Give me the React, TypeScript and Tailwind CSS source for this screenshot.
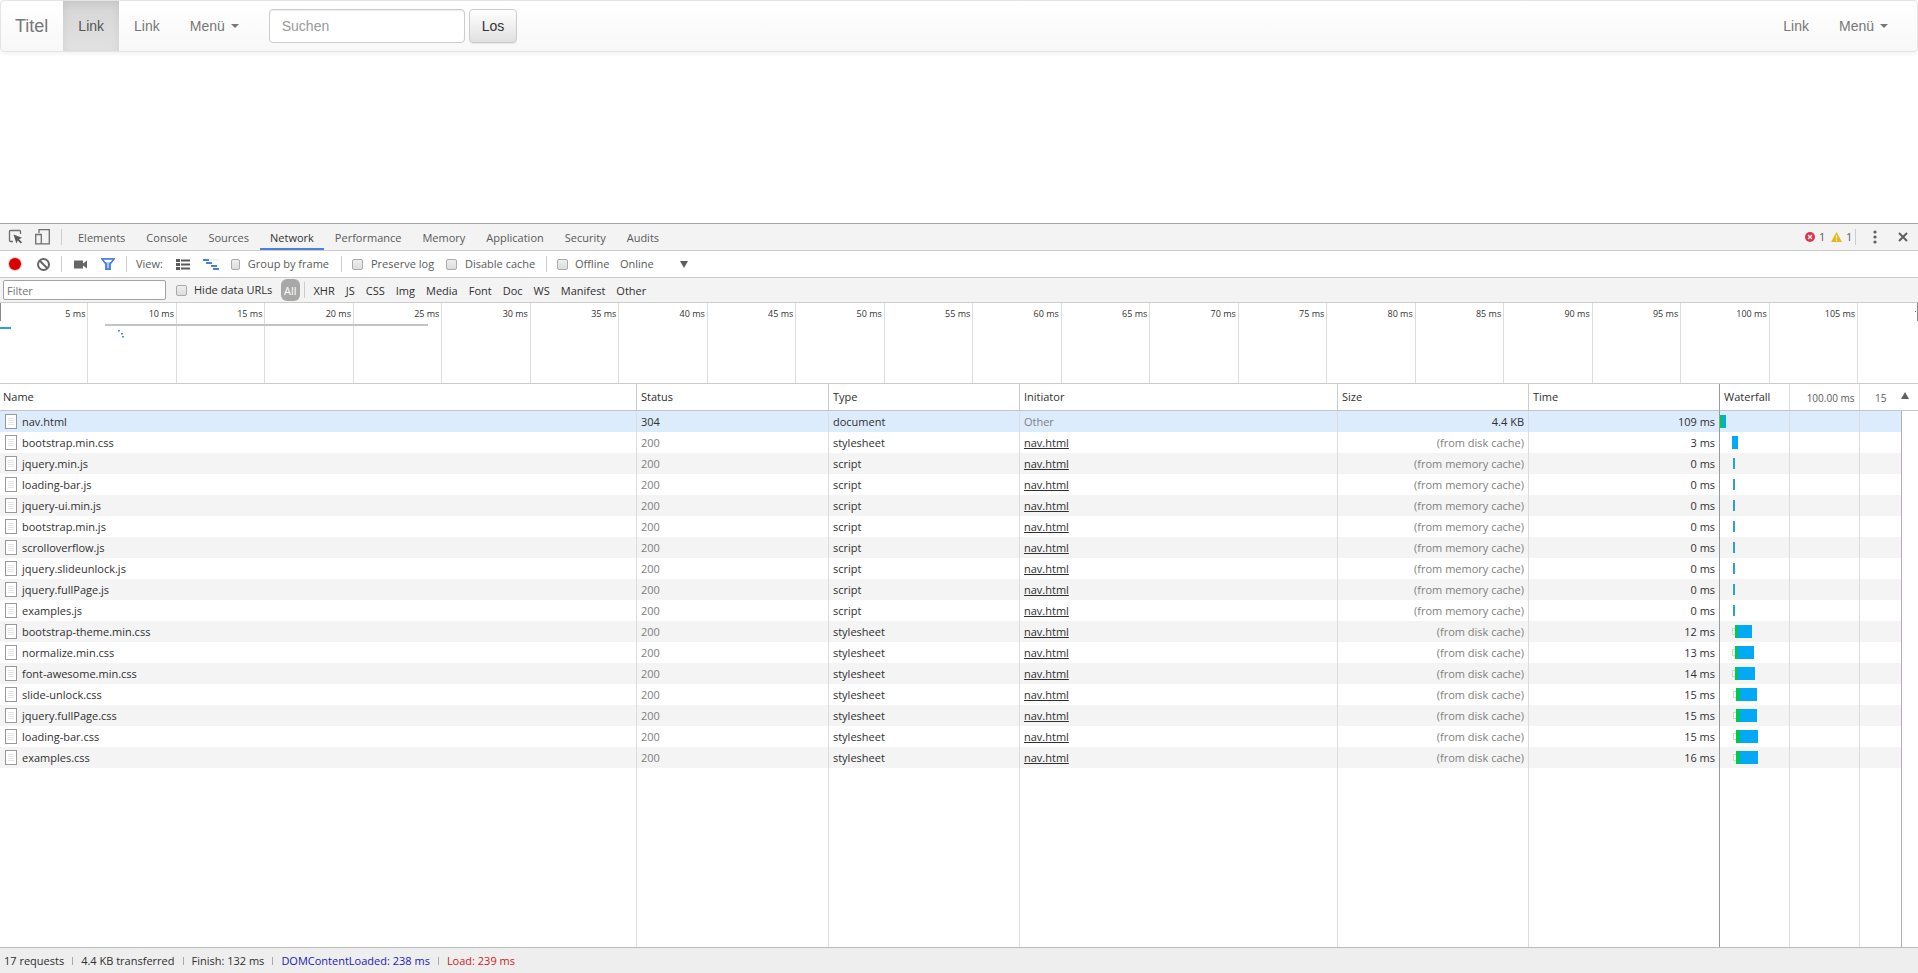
import { useState } from 'react'

type Bar = { start: number; queue?: boolean; wait: number; load: number; small?: boolean }
type Request = { name: string; status: string; type: string; size: string; time: string; bar: Bar }

const script = (name: string): Request => ({
  name, status: '200', type: 'script', size: '(from memory cache)', time: '0 ms',
  bar: { start: 13, wait: 0, load: 2, small: true },
})

const sheet = (name: string, time: string, bar: Bar): Request => ({
  name, status: '200', type: 'stylesheet', size: '(from disk cache)', time, bar,
})

const requests: Request[] = [
  { name: 'nav.html', status: '304', type: 'document', size: '4.4 KB', time: '109 ms', bar: { start: 0, wait: 3, load: 3 } },
  sheet('bootstrap.min.css', '3 ms', { start: 12, wait: 0, load: 6 }),
  script('jquery.min.js'),
  script('loading-bar.js'),
  script('jquery-ui.min.js'),
  script('bootstrap.min.js'),
  script('scrolloverflow.js'),
  script('jquery.slideunlock.js'),
  script('jquery.fullPage.js'),
  script('examples.js'),
  sheet('bootstrap-theme.min.css', '12 ms', { start: 12, queue: true, wait: 3, load: 14 }),
  sheet('normalize.min.css', '13 ms', { start: 12, queue: true, wait: 3, load: 16 }),
  sheet('font-awesome.min.css', '14 ms', { start: 12, queue: true, wait: 3, load: 17 }),
  sheet('slide-unlock.css', '15 ms', { start: 13, queue: true, wait: 4, load: 17 }),
  sheet('jquery.fullPage.css', '15 ms', { start: 13, queue: true, wait: 4, load: 17 }),
  sheet('loading-bar.css', '15 ms', { start: 13, queue: true, wait: 4, load: 18 }),
  sheet('examples.css', '16 ms', { start: 13, queue: true, wait: 4, load: 18 }),
]

const tabs = ['Elements', 'Console', 'Sources', 'Network', 'Performance', 'Memory', 'Application', 'Security', 'Audits']
const types = ['XHR', 'JS', 'CSS', 'Img', 'Media', 'Font', 'Doc', 'WS', 'Manifest', 'Other']
const ticks = Array.from({ length: 21 }, (_, i) => (i + 1) * 5)

const gridLines =
  'bg-[linear-gradient(#dcdcdc,#dcdcdc),linear-gradient(#dcdcdc,#dcdcdc)] bg-[length:1px_100%] bg-[position:69px_0,139px_0] bg-no-repeat'

function Caret() {
  return (
    <svg className="ml-1.5 h-1 w-2" viewBox="0 0 8 4" fill="currentColor" aria-hidden="true">
      <path d="M0 0h8L4 4z" />
    </svg>
  )
}

function Divider() {
  return <span className="h-4 w-px shrink-0 bg-[#ccc]" />
}

function Check({ label, className = 'gap-2' }: { label: string; className?: string }) {
  return (
    <label className={`flex items-center whitespace-nowrap ${className}`}>
      <input
        type="checkbox"
        className="size-[11px] appearance-none rounded-[2px] border border-[#aaa] bg-linear-to-b from-[#eee] to-[#ddd] checked:bg-[#777]"
      />
      {label}
    </label>
  )
}

function FileIcon() {
  return (
    <svg className="h-[15px] w-3 shrink-0" viewBox="0 0 12 15" aria-hidden="true">
      <rect x="0.5" y="0.5" width="11" height="14" fill="#fff" stroke="#999" />
      <path d="M3 4.5h6M3 6.5h6M3 8.5h6M3 10.5h6" stroke="#e4e4e4" />
    </svg>
  )
}

function WaterfallBar({ bar }: { bar: Bar }) {
  return (
    <div className="flex items-center" style={{ paddingLeft: bar.start }}>
      {bar.queue && <span className="h-[7px] w-[3px] border border-r-0 border-[#c4dfc4] bg-white" />}
      <span className="h-[13px] bg-[#00c853]" style={{ width: bar.wait }} />
      <span className={bar.small ? 'h-[11px] bg-[#2d9fd0]' : 'h-[13px] bg-[#03a9f4]'} style={{ width: bar.load }} />
    </div>
  )
}

function Navbar() {
  return (
    <nav className="flex h-[52px] shrink-0 items-stretch rounded border border-[#e4e4e4] bg-linear-to-b from-white to-[#f8f8f8] font-['Liberation_Sans',Arial,sans-serif] text-sm text-[#777] shadow-[0_1px_5px_rgba(0,0,0,0.075)]">
      <a href="#" className="flex items-center pr-[15px] pl-[14px] text-lg">Titel</a>
      <a href="#" className="flex items-center bg-linear-to-b from-[#d5d5d5] to-[#e2e2e2] px-[15px] text-[#555] shadow-[inset_0_3px_9px_rgba(0,0,0,0.075)]">Link</a>
      <a href="#" className="flex items-center px-[15px]">Link</a>
      <button className="flex items-center px-[15px]">Menü<Caret /></button>
      <form className="ml-[15px] flex items-center gap-1" onSubmit={(e) => e.preventDefault()}>
        <input
          type="text"
          aria-label="Suchen"
          placeholder="Suchen"
          className="h-[34px] w-[196px] rounded border border-[#ccc] bg-white px-3 text-[#555] shadow-[inset_0_1px_1px_rgba(0,0,0,0.075)] placeholder:text-[#999]"
        />
        <button className="h-[34px] rounded border border-[#ccc] bg-linear-to-b from-white to-[#e0e0e0] px-3 text-[#333] shadow-[0_1px_1px_rgba(0,0,0,0.075)]">Los</button>
      </form>
      <div className="mr-[14px] ml-auto flex">
        <a href="#" className="flex items-center px-[15px]">Link</a>
        <button className="flex items-center px-[15px]">Menü<Caret /></button>
      </div>
    </nav>
  )
}

function TabBar({ active, onSelect }: { active: string; onSelect: (tab: string) => void }) {
  return (
    <div className="flex h-[28px] shrink-0 items-center border-t border-b border-t-[#a3a3a3] border-b-[#ccc] bg-[#f3f3f3] text-[#5a5a5a]">
      <button aria-label="Inspect" className="ml-2">
        <svg className="size-4" viewBox="0 0 16 16" fill="none" aria-hidden="true">
          <path d="M5 12.5H2.500a1 1 0 0 1-1-1v-9a1 1 0 0 1 1-1h9a1 1 0 0 1 1 1V5" stroke="#6e6e6e" strokeWidth="1.3" />
          <path d="M5.500 5.500l8.500 3.200-3 1.500 3 3-1.200 1.200-3-3-1.400 3z" fill="#5a5a5a" />
        </svg>
      </button>
      <button aria-label="Toggle device" className="ml-2.5">
        <svg className="size-[18px]" viewBox="0 0 18 18" fill="none" stroke="#6e6e6e" strokeWidth="1.3" aria-hidden="true">
          <path d="M5 5V1.700h10.300v14.100H8" />
          <path d="M1.700 6.500h5.600v9.300H1.700z" />
        </svg>
      </button>
      <span className="ml-[9px] flex"><Divider /></span>
      <div role="tablist" className="ml-[6px] flex h-full gap-px">
        {tabs.map((tab) => (
          <button
            key={tab}
            role="tab"
            aria-selected={tab === active}
            onClick={() => onSelect(tab)}
            className={`border-b-2 px-[10px] pt-[3px] ${tab === active ? 'border-[#4a7fe0] text-[#333]' : 'border-transparent'}`}
          >
            {tab}
          </button>
        ))}
      </div>
      <div className="ml-auto flex items-center">
        <svg className="size-[10px]" viewBox="0 0 10 10" aria-hidden="true">
          <circle cx="5" cy="5" r="5" fill="#dc3545" />
          <path d="M3 3l4 4M7 3l-4 4" stroke="#fff" strokeWidth="1.1" />
        </svg>
        <span className="ml-1 w-3">1</span>
        <svg className="h-[10px] w-[11px]" viewBox="0 0 11 10" aria-hidden="true">
          <path d="M5.500 0L11 10H0z" fill="#ebb714" />
          <path d="M5.500 3.200v3.400M5.500 7.600v1.200" stroke="#fff" strokeWidth="1.2" />
        </svg>
        <span className="ml-1 w-[9px]">1</span>
        <Divider />
        <button aria-label="More" className="ml-[17px]">
          <svg className="h-[14px] w-1" viewBox="0 0 4 14" fill="#5f5f5f" aria-hidden="true">
            <circle cx="2" cy="2" r="1.6" />
            <circle cx="2" cy="7" r="1.6" />
            <circle cx="2" cy="12" r="1.6" />
          </svg>
        </button>
        <button aria-label="Close" className="mr-[10px] ml-[21px]">
          <svg className="size-[10px]" viewBox="0 0 10 10" stroke="#5f5f5f" strokeWidth="2" aria-hidden="true">
            <path d="M1 1l8 8M9 1L1 9" />
          </svg>
        </button>
      </div>
    </div>
  )
}

function Toolbar() {
  return (
    <div className="flex h-[27px] shrink-0 items-center border-b border-[#ccc] text-[#5a5a5a]">
      <button aria-label="Record" className="ml-2">
        <svg className="size-[14px]" viewBox="0 0 14 14" aria-hidden="true">
          <circle cx="7" cy="7" r="7" fill="#f9c4c4" />
          <circle cx="7" cy="7" r="6" fill="#d80000" />
        </svg>
      </button>
      <button aria-label="Clear" className="ml-[15px]">
        <svg className="size-[13px]" viewBox="0 0 13 13" fill="none" stroke="#666" strokeWidth="2" aria-hidden="true">
          <circle cx="6.500" cy="6.500" r="5.500" />
          <path d="M2.700 2.700l7.600 7.600" />
        </svg>
      </button>
      <span className="ml-[11px] flex"><Divider /></span>
      <button aria-label="Capture screenshots" className="ml-3">
        <svg className="h-[9px] w-[13px]" viewBox="0 0 13 9" fill="#666" aria-hidden="true">
          <path d="M0 .5h9v3l4-3v8l-4-3v3H0z" />
        </svg>
      </button>
      <button aria-label="Filter" className="ml-[14px]">
        <svg className="h-3 w-[14px]" viewBox="0 0 14 12" fill="#a9c4f5" stroke="#4a7fe0" strokeWidth="1.4" aria-hidden="true">
          <path d="M1 1h12L9 6v5.300H5V6z" />
          <path d="M2 1.200h10L10 4H4z" fill="#fff" stroke="none" />
          <path d="M1 1h12L9 6v5.300H5V6z" fill="none" />
        </svg>
      </button>
      <span className="ml-[11px] flex"><Divider /></span>
      <span className="ml-[9px] w-[31px]">View:</span>
      <button aria-label="List view" className="ml-[9px]">
        <svg className="h-[11px] w-[14px]" viewBox="0 0 14 11" fill="#5a5a5a" aria-hidden="true">
          <path d="M0 0h4v3H0zM0 4h4v3H0zM0 8h4v3H0zM5 .5h9v2H5zM5 4.500h9v2H5zM5 8.500h9v2H5z" />
        </svg>
      </button>
      <button aria-label="Waterfall view" className="ml-[13px]">
        <svg className="h-[11px] w-4" viewBox="0 0 16 11" fill="#4a7fe0" aria-hidden="true">
          <path d="M0 0h6v2H0zM3 3h6v2H3zM8 6h6v2H8zM10 9h6v2h-6z" />
          <path d="M7 .5h9v1H7z" fill="#dbe6fa" />
        </svg>
      </button>
      <Check label="Group by frame" className="ml-3 w-[98px] gap-2" />
      <span className="ml-3 flex"><Divider /></span>
      <Check label="Preserve log" className="ml-[10px] w-[94px] gap-2" />
      <Check label="Disable cache" className="w-[94px] gap-2" />
      <span className="ml-[6px] flex"><Divider /></span>
      <Check label="Offline" className="ml-[10px] w-[63px] gap-[7px]" />
      <div className="flex items-center">
        <select aria-label="Throttling" className="w-[60px] appearance-none bg-transparent">
          <option>Online</option>
          <option>Offline</option>
        </select>
        <svg className="pointer-events-none h-[7px] w-2" viewBox="0 0 8 7" fill="#5f5f5f" aria-hidden="true">
          <path d="M0 0h8L4 7z" />
        </svg>
      </div>
    </div>
  )
}

function FilterBar() {
  return (
    <div className="flex h-[25px] shrink-0 items-center border-b border-[#ccc] bg-[#f3f3f3] text-[#303030]">
      <input
        type="text"
        aria-label="Filter"
        placeholder="Filter"
        className="ml-[3px] h-5 w-[163px] rounded-[2px] border border-[#a3a3a3] bg-white px-[3px] placeholder:text-[#757575]"
      />
      <Check label="Hide data URLs" className="ml-[10px] w-[105px] gap-[7px]" />
      <button className="flex h-[22px] items-center rounded-md bg-[#a8a8a8] px-[3px] pt-px text-white">All</button>
      <span className="ml-1 flex"><Divider /></span>
      <div className="ml-[9px] flex gap-[11px] pt-[2px]">
        {types.map((type) => (
          <button key={type}>{type}</button>
        ))}
      </div>
    </div>
  )
}

function Overview() {
  return (
    <div className="relative flex h-[81px] shrink-0 overflow-hidden border-b border-[#ccc] text-[9px] leading-3 text-[#333]">
      {ticks.map((tick) => (
        <div key={tick} className="w-[4.614%] shrink-0 border-r border-[#dcdcdc] pt-[5px] pr-[2px] text-right">{tick} ms</div>
      ))}
      <svg className="absolute inset-0 h-full w-full" aria-hidden="true">
        <rect x="0" y="0" width="1" height="18" fill="#888" />
        <rect x="0" y="24" width="11" height="2" fill="#2d9fd0" />
        <rect x="105" y="21" width="323" height="2" fill="#c4c4c4" />
        <path d="M118 27h2v1.500h-2zM121 30h2v1.500h-2zM122 33h2v1.500h-2z" fill="#4a96c4" />
      </svg>
      <span className="mt-2 ml-auto size-px bg-[#666]" />
      <span className="ml-px h-[18px] w-px bg-[#888]" />
    </div>
  )
}

function RequestTable() {
  const [selected, setSelected] = useState('nav.html')
  const head = 'h-[27px] border-r border-b border-r-[#ccc] border-b-[#c0c6cc] text-left font-normal'
  const cell = 'border-r border-[#dcdcdc] px-[4px]'

  return (
    <div className="min-h-0 flex-1">
      <table className="h-full w-full table-fixed border-separate border-spacing-0 whitespace-nowrap text-[#303030]">
        <colgroup>
          <col className="w-[33.21%]" />
          <col className="w-[10.01%]" />
          <col className="w-[9.96%]" />
          <col className="w-[16.58%]" />
          <col className="w-[9.96%]" />
          <col className="w-[9.91%]" />
          <col />
          <col className="w-[17px]" />
        </colgroup>
        <thead>
          <tr>
            <th className={`${head} px-[3px]`}>Name</th>
            <th className={`${head} px-[4px]`}>Status</th>
            <th className={`${head} px-[4px]`}>Type</th>
            <th className={`${head} px-[4px]`}>Initiator</th>
            <th className={`${head} px-[4px]`}>Size</th>
            <th className="h-[27px] border-b border-[#c0c6cc] px-[4px] text-left font-normal">Time</th>
            <th colSpan={2} className={`h-[27px] border-b border-l border-b-[#c0c6cc] border-l-[#999] px-[4px] font-normal ${gridLines}`}>
              <div className="flex items-center">
                <span className="w-[81px] text-left">Waterfall</span>
                <span className="w-[51px] pt-[2px] text-[10px] text-[#5a5a5a]">100.00 ms</span>
                <span className="ml-[19px] pt-[2px] text-[10px] text-[#5a5a5a]">15</span>
                <svg className="mr-[5px] mb-[3px] ml-auto h-[7px] w-2" viewBox="0 0 8 7" fill="#5f5f5f" aria-hidden="true">
                  <path d="M0 7h8L4 0z" />
                </svg>
              </div>
            </th>
          </tr>
        </thead>
        <tbody>
          {requests.map((r) => (
            <tr
              key={r.name}
              onClick={() => setSelected(r.name)}
              className={r.name === selected ? 'bg-[#dcecfc]' : 'odd:bg-[#f4f4f4]'}
            >
              <td className={`h-[21px] ${cell}`}>
                <div className="flex items-center gap-[5px] pl-px"><FileIcon />{r.name}</div>
              </td>
              <td className={`${cell} ${r.status === '200' ? 'text-[#808080]' : ''}`}>{r.status}</td>
              <td className={cell}>{r.type}</td>
              <td className={cell}>
                {r.type === 'document' ? <span className="text-[#808080]">Other</span> : <a href="#" className="underline">nav.html</a>}
              </td>
              <td className={`${cell} text-right ${r.status === '200' ? 'text-[#808080]' : ''}`}>{r.size}</td>
              <td className="px-[4px] text-right">{r.time}</td>
              <td className={`border-l border-[#999] p-0 ${gridLines}`}><WaterfallBar bar={r.bar} /></td>
              <td className="border-l border-[#b8a9bd] bg-white p-0" />
            </tr>
          ))}
          <tr className="h-auto">
            <td className={cell} />
            <td className={cell} />
            <td className={cell} />
            <td className={cell} />
            <td className={cell} />
            <td />
            <td className={`border-l border-[#999] ${gridLines}`} />
            <td className="border-l border-[#b8a9bd] p-0" />
          </tr>
        </tbody>
      </table>
    </div>
  )
}

function StatusBar() {
  return (
    <footer className="flex h-[26px] shrink-0 items-center gap-2 border-t border-[#bbb] bg-[#eee] px-1 text-[#303030]">
      <span>17 requests</span>
      <span className="h-2 w-px bg-[#aaa]" />
      <span>4.4 KB transferred</span>
      <span className="h-2 w-px bg-[#aaa]" />
      <span>Finish: 132 ms</span>
      <span className="h-2 w-px bg-[#aaa]" />
      <span className="text-[#1a1ab8]">DOMContentLoaded: 238 ms</span>
      <span className="h-2 w-px bg-[#aaa]" />
      <span className="text-[#d01c1c]">Load: 239 ms</span>
    </footer>
  )
}

export default function App() {
  const [tab, setTab] = useState('Network')

  return (
    <div className="flex h-screen flex-col bg-white">
      <Navbar />
      <main className="h-[171px] shrink-0" />
      <section className="flex min-h-0 flex-1 flex-col font-['Open_Sans','Noto_Sans',sans-serif] text-[11px] leading-4">
        <TabBar active={tab} onSelect={setTab} />
        <Toolbar />
        <FilterBar />
        <Overview />
        <RequestTable />
        <StatusBar />
      </section>
    </div>
  )
}
